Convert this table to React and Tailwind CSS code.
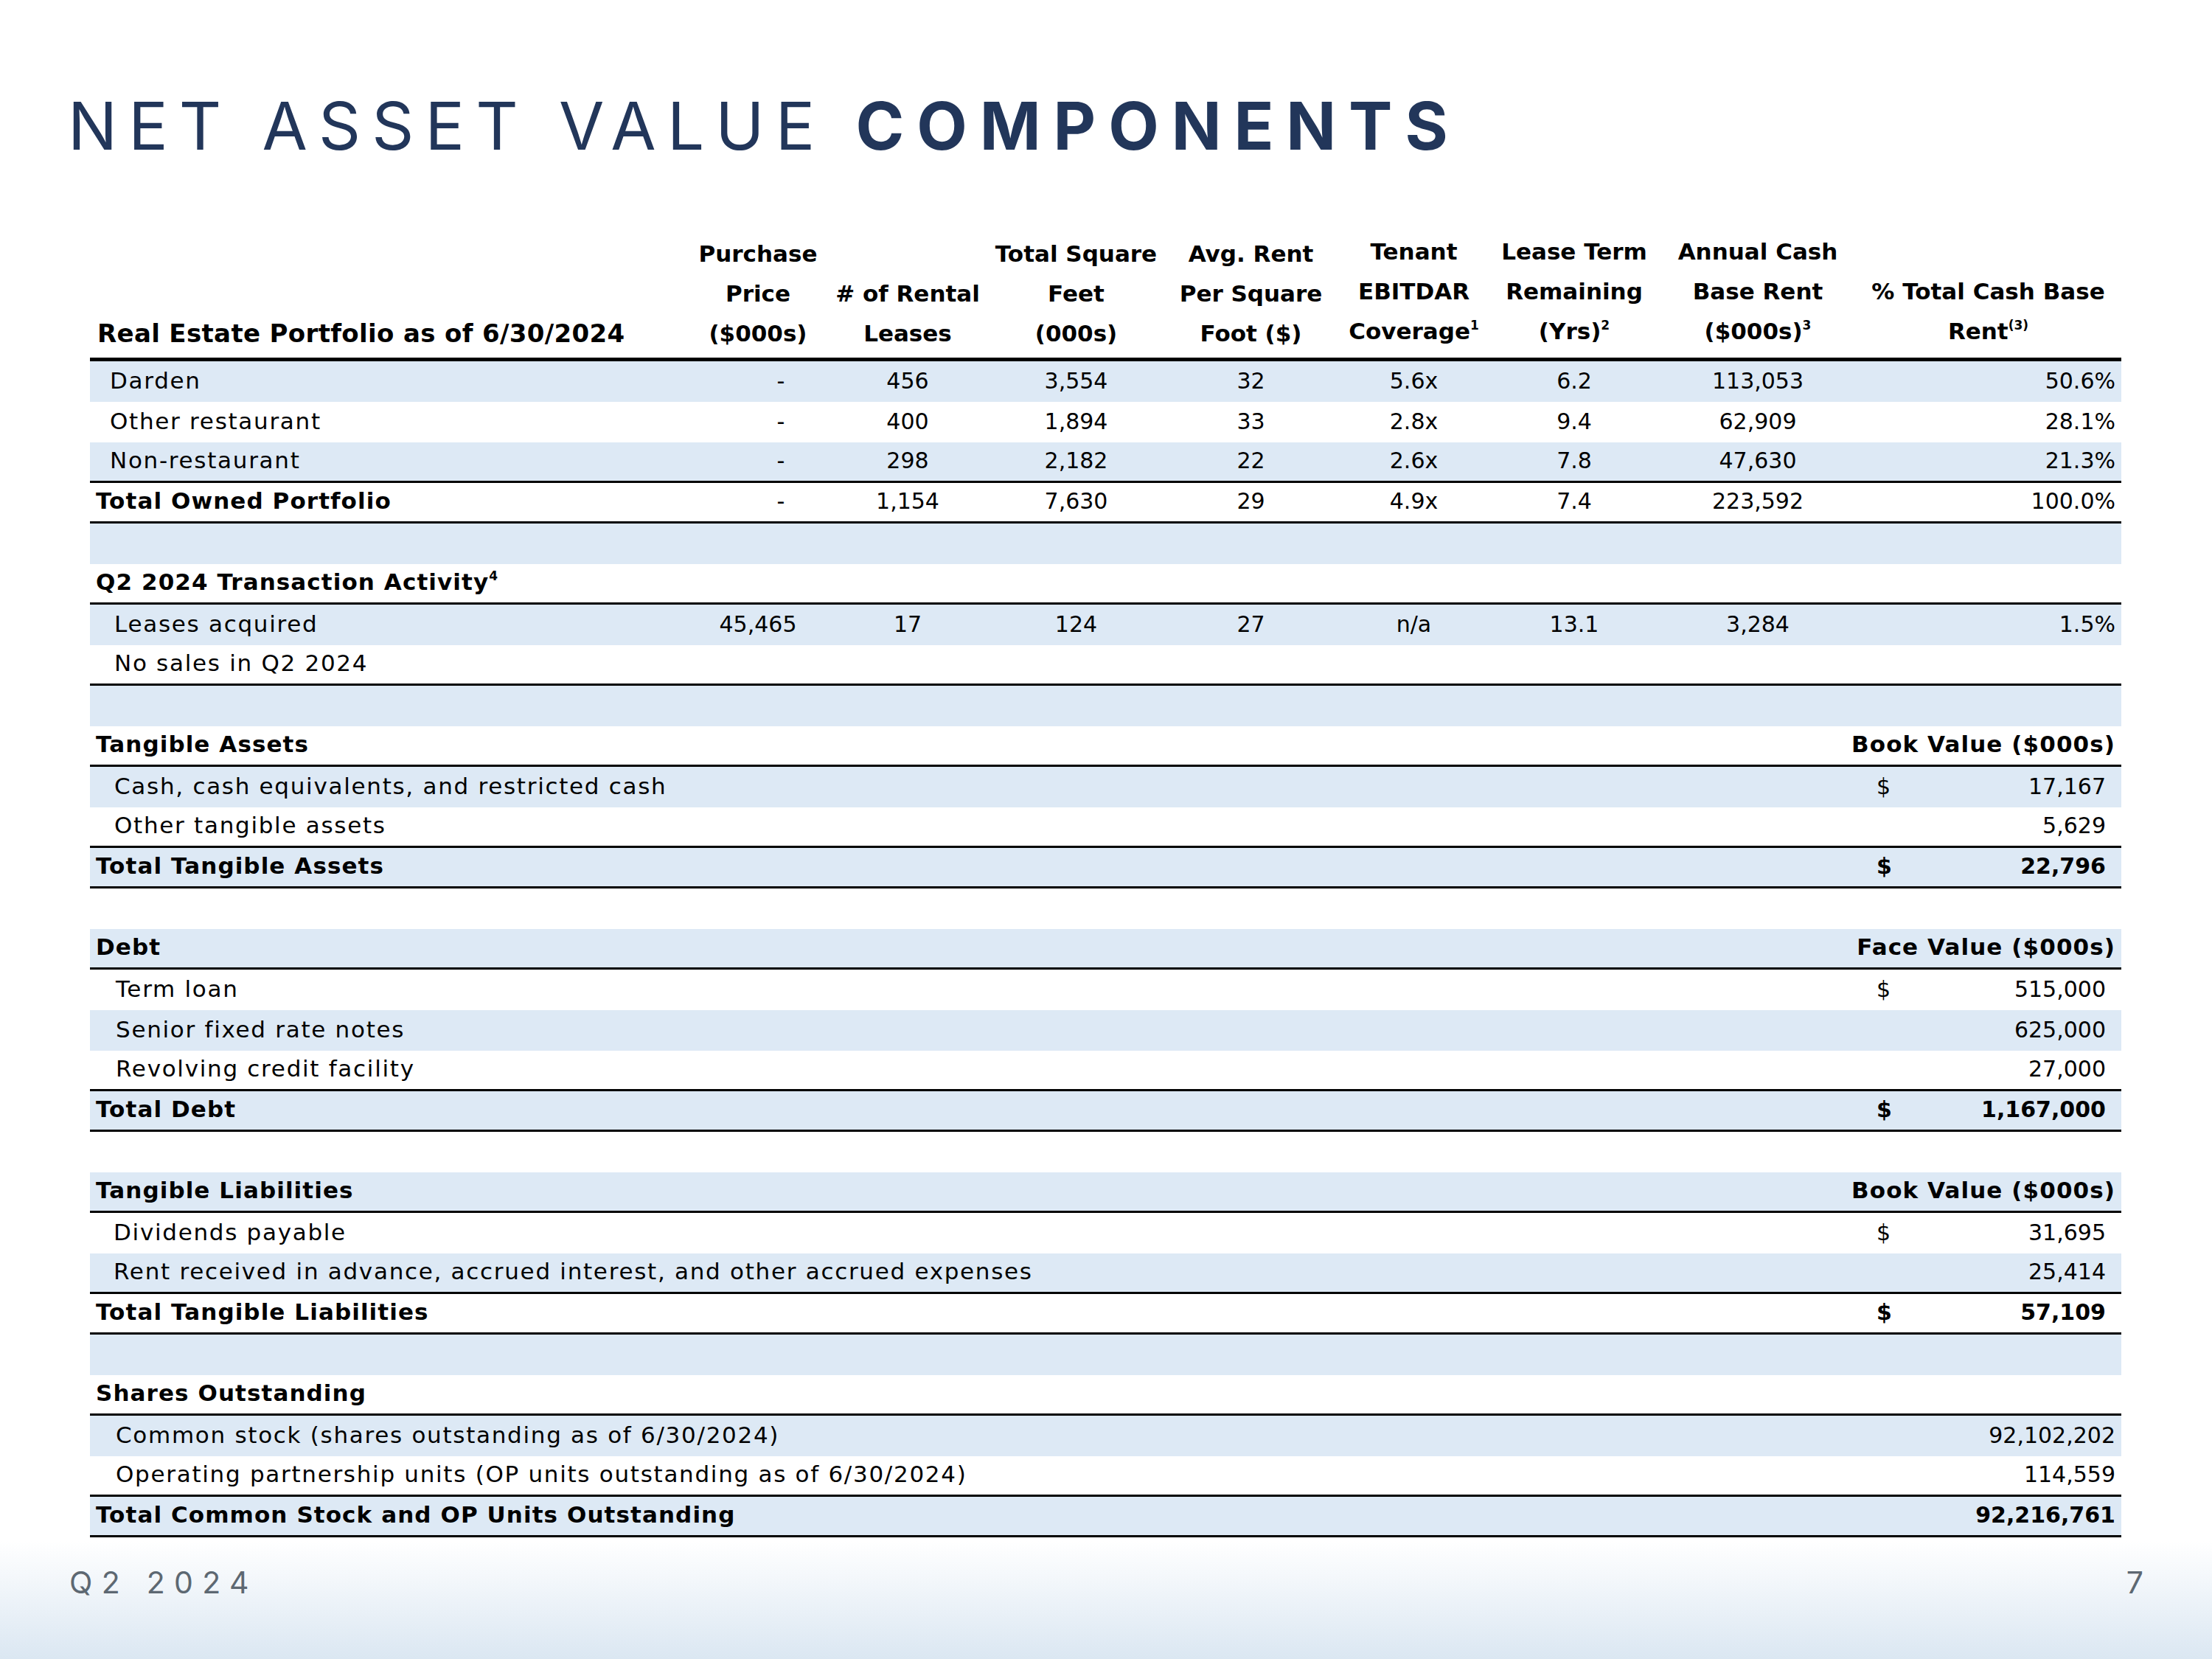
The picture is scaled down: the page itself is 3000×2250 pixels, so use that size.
import React from "react";

function Row({ bg, border, children }) {
  return (
    <div
      className={
        "flex h-[55px] items-center pb-[3px] " +
        (bg ? "bg-[#dde9f5] " : "bg-white ") +
        (border ? "border-b-[3px] border-black" : "")
      }
    >
      {children}
    </div>
  );
}

function Sup({ children }) {
  return <sup className="relative -top-[13px] align-baseline text-[17px] tracking-normal">{children}</sup>;
}

function Label({ bold, indent, grow, children }) {
  return (
    <div
      className={
        (grow ? "flex-1 " : "w-[815px] ") +
        "whitespace-nowrap text-[31px] " +
        (indent ? indent : "pl-[8px]") +
        (bold ? " font-bold tracking-[0.035em]" : " tracking-[0.055em]")
      }
    >
      {children}
    </div>
  );
}

function DataRow({ label, bg, border, bold, indent, vals }) {
  return (
    <Row bg={bg} border={border}>
      <Label bold={bold} indent={indent}>{label}</Label>
      {vals ? (
        <>
          <div className={"w-[182px] text-center " + (vals[0] === "-" ? "pl-[62px]" : "")}>{vals[0]}</div>
          <div className="w-[224px] text-center">{vals[1]}</div>
          <div className="w-[233px] text-center">{vals[2]}</div>
          <div className="w-[241px] text-center">{vals[3]}</div>
          <div className="w-[201px] text-center">{vals[4]}</div>
          <div className="w-[234px] text-center">{vals[5]}</div>
          <div className="w-[264px] text-center">{vals[6]}</div>
          <div className="w-[361px] pr-[8px] text-right">{vals[7]}</div>
        </>
      ) : null}
    </Row>
  );
}

function ValRow({ label, bg, border, bold, indent, dollar, value, head }) {
  return (
    <Row bg={bg} border={border}>
      <Label bold={bold} indent={indent} grow>{label}</Label>
      {head ? (
        <div className="whitespace-nowrap pr-[8px] text-[31px] font-bold tracking-[0.035em]">{head}</div>
      ) : (
        <div className={"flex w-[337px] items-center " + (bold ? "font-bold" : "")}>
          <span className="pl-[5px]">{dollar ? "$" : ""}</span>
          <span className="ml-auto pr-[21px]">{value}</span>
        </div>
      )}
    </Row>
  );
}

function Head({ w, lines, sup, extra }) {
  return (
    <div className={w + " flex flex-col items-center " + (extra || "")}>
      {lines.map((l, i) => (
        <div key={i} className="h-[54px] whitespace-nowrap leading-[54px]">
          {l}
          {i === lines.length - 1 && sup ? <Sup>{sup}</Sup> : null}
        </div>
      ))}
    </div>
  );
}

export default function App() {
  return (
    <div className="relative flex h-[2250px] w-[3000px] flex-col bg-white font-['DejaVu_Sans',sans-serif] text-black">
      <div className="h-[317px] pt-[126px] pl-[92px]">
        <h1 className="whitespace-nowrap font-['Inter',sans-serif] text-[89px] leading-[89px] text-[#22365a]">
          <span className="font-normal tracking-[0.17em]">NET ASSET VALUE </span>
          <span className="font-bold tracking-[0.19em]">COMPONENTS</span>
        </h1>
      </div>

      <div className="ml-[122px] w-[2755px] text-[30px]">
        <div className="flex items-end border-b-[5px] border-black pb-[6px] text-[31px] font-bold">
          <div className="w-[815px] whitespace-nowrap pl-[10px] text-[34px] leading-[54px] tracking-[0.01em]">Real Estate Portfolio as of 6/30/2024</div>
          <Head w="w-[182px]" lines={["Purchase", "Price", "($000s)"]} />
          <Head w="w-[224px]" lines={["# of Rental", "Leases"]} />
          <Head w="w-[233px]" lines={["Total Square", "Feet", "(000s)"]} />
          <Head w="w-[241px]" lines={["Avg. Rent", "Per Square", "Foot ($)"]} />
          <Head w="w-[201px]" lines={["Tenant", "EBITDAR", "Coverage"]} sup="1" extra="-translate-y-[3px]" />
          <Head w="w-[234px]" lines={["Lease Term", "Remaining", "(Yrs)"]} sup="2" extra="-translate-y-[3px]" />
          <Head w="w-[264px]" lines={["Annual Cash", "Base Rent", "($000s)"]} sup="3" extra="-translate-y-[3px]" />
          <Head w="w-[361px]" lines={["% Total Cash Base", "Rent"]} sup="(3)" extra="-translate-y-[3px]" />
        </div>

        <DataRow label="Darden" bg indent="pl-[27px]" vals={["-", "456", "3,554", "32", "5.6x", "6.2", "113,053", "50.6%"]} />
        <DataRow label="Other restaurant" indent="pl-[27px]" vals={["-", "400", "1,894", "33", "2.8x", "9.4", "62,909", "28.1%"]} />
        <DataRow label="Non-restaurant" bg border indent="pl-[27px]" vals={["-", "298", "2,182", "22", "2.6x", "7.8", "47,630", "21.3%"]} />
        <DataRow label="Total Owned Portfolio" bold border vals={["-", "1,154", "7,630", "29", "4.9x", "7.4", "223,592", "100.0%"]} />
        <Row bg />
        <Row border>
          <Label bold>
            Q2 2024 Transaction Activity<Sup>4</Sup>
          </Label>
        </Row>
        <DataRow label="Leases acquired" bg indent="pl-[33px]" vals={["45,465", "17", "124", "27", "n/a", "13.1", "3,284", "1.5%"]} />
        <DataRow label="No sales in Q2 2024" border indent="pl-[33px]" />
        <Row bg />

        <ValRow label="Tangible Assets" bold border head="Book Value ($000s)" />
        <ValRow label="Cash, cash equivalents, and restricted cash" bg indent="pl-[33px]" dollar value="17,167" />
        <ValRow label="Other tangible assets" border indent="pl-[33px]" value="5,629" />
        <ValRow label="Total Tangible Assets" bg border bold dollar value="22,796" />
        <Row />

        <ValRow label="Debt" bg bold border head="Face Value ($000s)" />
        <ValRow label="Term loan" indent="pl-[35px]" dollar value="515,000" />
        <ValRow label="Senior fixed rate notes" bg indent="pl-[35px]" value="625,000" />
        <ValRow label="Revolving credit facility" border indent="pl-[35px]" value="27,000" />
        <ValRow label="Total Debt" bg border bold dollar value="1,167,000" />
        <Row />

        <ValRow label="Tangible Liabilities" bg bold border head="Book Value ($000s)" />
        <ValRow label="Dividends payable" indent="pl-[32px]" dollar value="31,695" />
        <ValRow label="Rent received in advance, accrued interest, and other accrued expenses" bg border indent="pl-[32px]" value="25,414" />
        <ValRow label="Total Tangible Liabilities" border bold dollar value="57,109" />
        <Row bg />

        <Row border>
          <Label bold>Shares Outstanding</Label>
        </Row>
        <Row bg>
          <Label grow indent="pl-[35px]">Common stock (shares outstanding as of 6/30/2024)</Label>
          <div className="pr-[8px]">92,102,202</div>
        </Row>
        <Row border>
          <Label grow indent="pl-[35px]">Operating partnership units (OP units outstanding as of 6/30/2024)</Label>
          <div className="pr-[8px]">114,559</div>
        </Row>
        <Row bg border>
          <Label grow bold>Total Common Stock and OP Units Outstanding</Label>
          <div className="pr-[8px] font-bold">92,216,761</div>
        </Row>
      </div>

      <div className="mt-auto flex h-[160px] items-start justify-between bg-gradient-to-b from-white to-[#dbe7f2] pt-[36px] pr-[93px] pl-[94px] font-['Inter',sans-serif] text-[41px] leading-[41px] text-[#5d6872]">
        <div className="tracking-[0.3em]">Q2 2024</div>
        <div>7</div>
      </div>
    </div>
  );
}
